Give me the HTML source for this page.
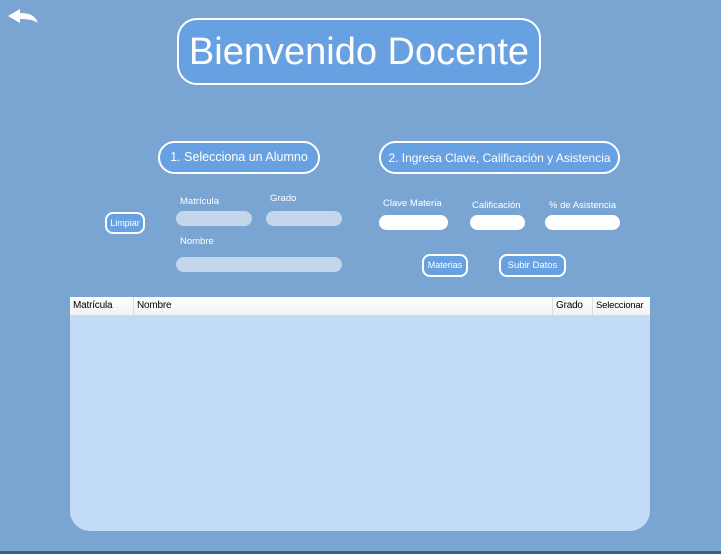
<!DOCTYPE html>
<html><head><meta charset="utf-8">
<style>
*{margin:0;padding:0;box-sizing:border-box}
body{width:721px;height:554px;background:#7aa5d3;position:relative;overflow:hidden;font-family:"Liberation Sans",sans-serif;color:#fff}
.a{position:absolute}
.pill{position:absolute;border:2px solid #fff;background:#68a1e1;color:#fff;display:flex;align-items:center;justify-content:center;white-space:nowrap;line-height:1}
.lbl{position:absolute;font-size:9.5px;color:#fff;white-space:nowrap}
.in{position:absolute;border-radius:8px;height:15px}
.g{background:#c3d6ea}
.w{background:#fff}
.th{position:absolute;top:0;height:18px;font-size:10px;color:#000;line-height:18px;padding-left:3px;border-right:1px solid #dcdcdc;letter-spacing:-0.2px}
</style></head><body>
<svg class="a" style="left:7px;top:9px" width="32" height="16" viewBox="0 0 32 16"><path d="M1 7 L13 0 L13 4 C22 4 28 6 31 14 C27 11 21 10 13 10 L13 14 Z" fill="#fff"/></svg>
<div class="pill" style="left:177px;top:18px;width:364px;height:67px;border-radius:20px;font-size:38px">Bienvenido Docente</div>
<div class="pill" style="left:158px;top:141px;width:162px;height:33px;border-radius:17px;font-size:12.5px">1. Selecciona un Alumno</div>
<div class="pill" style="left:379px;top:141px;width:241px;height:33px;border-radius:17px;font-size:12px">2. Ingresa Clave, Calificación y Asistencia</div>
<div class="pill" style="left:105px;top:212px;width:40px;height:22px;border-radius:8px;font-size:9px">Limpiar</div>
<div class="lbl" style="left:180px;top:196px">Matrícula</div>
<div class="lbl" style="left:270px;top:193px">Grado</div>
<div class="lbl" style="left:180px;top:236px">Nombre</div>
<div class="in g" style="left:176px;top:211px;width:76px"></div>
<div class="in g" style="left:266px;top:211px;width:76px"></div>
<div class="in g" style="left:176px;top:257px;width:166px"></div>
<div class="lbl" style="left:383px;top:198px">Clave Materia</div>
<div class="lbl" style="left:472px;top:200px">Calificación</div>
<div class="lbl" style="left:549px;top:200px">% de Asistencia</div>
<div class="in w" style="left:379px;top:215px;width:69px"></div>
<div class="in w" style="left:470px;top:215px;width:55px"></div>
<div class="in w" style="left:545px;top:215px;width:75px"></div>
<div class="pill" style="left:422px;top:254px;width:46px;height:23px;border-radius:8px;font-size:9px">Materias</div>
<div class="pill" style="left:499px;top:254px;width:67px;height:23px;border-radius:8px;font-size:9.5px">Subir Datos</div>
<div class="a" style="left:70px;top:297px;width:580px;height:234px;background:#c2dcf5;border-radius:0 0 20px 20px;overflow:hidden">
<div class="a" style="left:0;top:0;width:580px;height:18px;background:linear-gradient(#fff,#f0f2f4)"></div>
<div class="th" style="left:0;width:64px">Matrícula</div>
<div class="th" style="left:64px;width:419px">Nombre</div>
<div class="th" style="left:483px;width:40px">Grado</div>
<div class="th" style="left:523px;width:57px;border-right:none;font-size:9.5px">Seleccionar</div>
</div>
<div class="a" style="left:0;top:551px;width:721px;height:3px;background:#3d5c86"></div>
</body></html>
